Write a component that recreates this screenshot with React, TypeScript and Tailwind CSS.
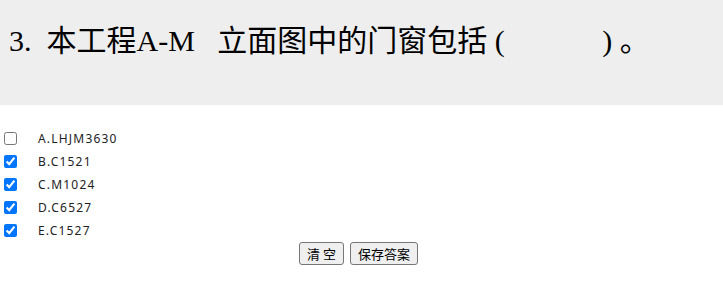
import React from 'react'

const options = [
  { key: 'A', label: 'A.LHJM3630', checked: false },
  { key: 'B', label: 'B.C1521', checked: true },
  { key: 'C', label: 'C.M1024', checked: true },
  { key: 'D', label: 'D.C6527', checked: true },
  { key: 'E', label: 'E.C1527', checked: true },
]

const App = () => {
  return (
    <div className="w-[723px] h-[288px] bg-white overflow-hidden">
      <div className="h-[105px] bg-[#eeeeee] pt-[23px] pl-[9px]">
        <p
          className="text-[30px] leading-[36px] text-black whitespace-pre"
          style={{ fontFamily: '"Liberation Serif", "Noto Sans CJK SC", serif' }}
        >
          {'3.  本工程A-M   立面图中的门窗包括 (             ) 。'}
        </p>
      </div>
      <div className="mt-[22px]">
        {options.map((o) => (
          <label key={o.key} className="flex items-center h-[23px]">
            <input
              type="checkbox"
              defaultChecked={o.checked}
              className="w-[13px] h-[13px] ml-[4px] m-0"
            />
            <span
              className="ml-[21px] text-[12px] tracking-[1.2px] text-[#222]"
              style={{ fontFamily: '"Noto Sans", "Noto Sans CJK SC", sans-serif' }}
            >
              {o.label}
            </span>
          </label>
        ))}
      </div>
      <div
        className="flex justify-center gap-[6px] pr-[6px]"
        style={{ fontFamily: '"Noto Sans CJK SC", sans-serif' }}
      >
        <button className="h-[23px] px-[7px] border border-[#767676] rounded-[3px] bg-[#efefef] text-[13px] leading-none text-black">
          清 空
        </button>
        <button className="h-[23px] px-[7px] border border-[#767676] rounded-[3px] bg-[#efefef] text-[13px] leading-none text-black">
          保存答案
        </button>
      </div>
    </div>
  )
}

export default App
